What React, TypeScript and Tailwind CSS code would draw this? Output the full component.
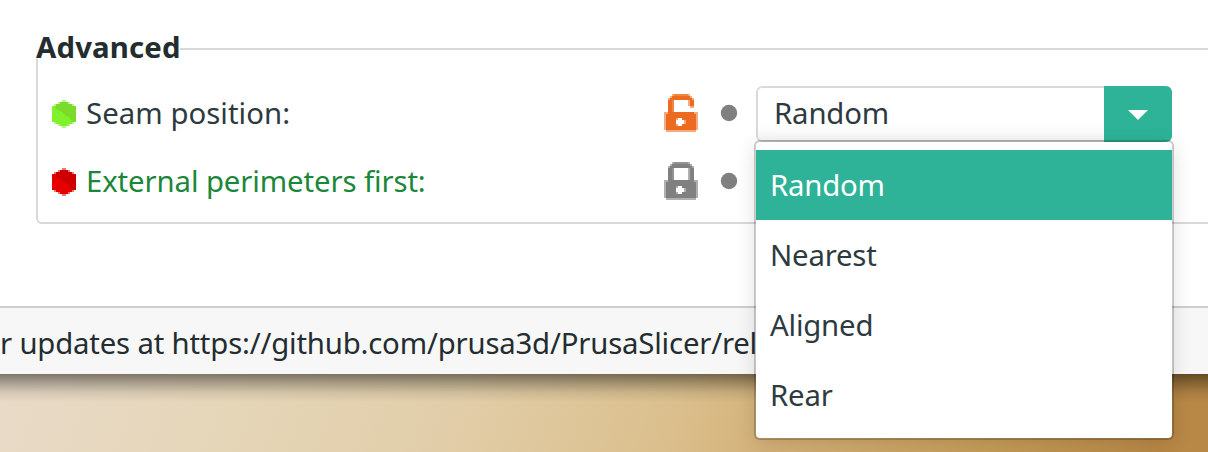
import React from "react";

function Hexagon({ base, shade, edge }: { base: string; shade: string; edge: string }) {
  return (
    <svg className="h-7 w-6 shrink-0" viewBox="0 0 24 28" aria-hidden="true">
      <g shapeRendering="crispEdges">
        <path
          fill={edge}
          d="M10 0h4v2h4v2h4v2h2v16h-2v2h-4v2h-4v2h-4v-2h-4v-2h-4v-2h-2v-16h2v-2h4v-2h4z"
        />
        <path
          fill={base}
          d="M8 2h8v2h4v2h4v16h-4v2h-4v2h-8v-2h-4v-2h-4v-16h4v-2h4z"
        />
      </g>
      <path fill={shade} d="M8 2h8v2h4v2h4v16h-4c-1-3-4-6-7-7c-2-3-6-5-10-6l1-3v-2h4z" />
    </svg>
  );
}

function Lock({ open = false }: { open?: boolean }) {
  const main = open ? "#ed6b21" : "#808080";
  const mid = open ? "#f0853f" : "#929292";
  const soft = open ? "#f5ab80" : "#b0b0b0";
  return (
    <svg
      className="-mt-0.5 h-[38px] w-[34px] shrink-0"
      viewBox="0 0 34 38"
      shapeRendering="crispEdges"
      aria-hidden="true"
    >
      <path fill={soft} d="M8 0h18v2h2v2h2v4h-6v-2h-14v2h-6v-4h2v-2h2z" />
      <path fill={mid} d="M10 0h14v2h-14z" />
      <path fill={mid} d="M8 6h2v12h-2z" />
      <path fill={soft} d={open ? "M24 6h2v6h4v2h-4v-2h-2z" : "M24 6h2v12h-2z"} />
      <path fill={main} d="M8 2h18v2h2v2h-22v-2h2z" />
      <path fill={main} d="M4 6h4v12h-4z" />
      <path fill={main} d={open ? "M26 6h4v6h-4z" : "M26 6h4v12h-4z"} />
      <path fill={soft} d="M0 18h34v18h-2v2h-30v-2h-2z" />
      <path fill={main} d="M2 20h30v16h-30zM4 18h26v2h-26z" />
      <path fill={soft} d="M12 24h6v2h4v4h-4v2h-6z" />
      <path fill="#ffffff" d="M12 26h2v-2h4v2h2v4h-2v2h-4v-2h-2z" />
    </svg>
  );
}

function Dot() {
  return (
    <svg className="-mt-0.5 ml-[22px] size-[18px] shrink-0" viewBox="0 0 18 18" aria-hidden="true">
      <circle cx="9" cy="9" r="8.2" fill="#808080" />
    </svg>
  );
}

const options = ["Random", "Nearest", "Aligned", "Rear"];

function SeamSelect() {
  return (
    <div className="relative ml-[18px] h-14 w-[416px] shrink-0">
      <div className="flex h-full w-full overflow-hidden rounded-md">
        <div className="flex flex-1 items-center rounded-l-md border-2 border-r-0 border-[#d9d9d9] bg-linear-to-b from-white from-70% to-[#f8f8f8] pb-0.5 pl-4 tracking-[-0.15px]">
          Random
        </div>
        <div className="flex w-[68px] items-center justify-center bg-[#2eb398]">
          <svg className="mt-0.5 h-2.5 w-5" viewBox="0 0 20 10" aria-hidden="true">
            <path d="M0 0h20l-10 10z" fill="#ffffff" />
          </svg>
        </div>
      </div>
      <ul className="absolute -left-0.5 top-[54px] z-10 w-[420px] rounded-md border-2 border-black/20 bg-white bg-clip-padding py-2 tracking-[-0.2px] shadow-[0_4px_20px_rgba(0,0,0,0.12)]">
        {options.map((name, i) => (
          <li
            key={name}
            className={i === 0 ? "flex h-[70px] items-center bg-[#2eb398] pl-3.5 text-white" : "flex h-[70px] items-center pl-3.5"}
          >
            {name}
          </li>
        ))}
      </ul>
    </div>
  );
}

export default function App() {
  return (
    <div className="flex h-[452px] w-[1208px] flex-col overflow-hidden bg-white font-['Noto_Sans',sans-serif] text-[29.333px] leading-10 text-[#2d3a3f]">
      <main className="h-[306px] shrink-0 pl-9 pt-12">
        <section className="h-44 rounded-bl-md border-2 border-r-0 border-[#d9d9d9]">
          <h2 className="-ml-0.5 -mt-[23px] h-8 w-36 bg-white font-bold tracking-[0.15px] text-[#232d30]">
            Advanced
          </h2>
          <div className="mt-[21px] flex h-[68px] items-center pl-3.5">
            <Hexagon base="#80f22b" shade="#7bdb2b" edge="#b6f58a" />
            <span className="w-[588px] shrink-0 pb-0.5 pl-2.5 tracking-[0.05px]">Seam position:</span>
            <Lock open />
            <Dot />
            <SeamSelect />
          </div>
          <div className="flex h-[68px] items-center pl-3.5">
            <Hexagon base="#e60000" shade="#cc0000" edge="#ec7777" />
            <span className="w-[588px] shrink-0 pb-0.5 pl-2.5 tracking-[-0.1px] text-[#1b8738]">
              External perimeters first:
            </span>
            <Lock />
            <Dot />
          </div>
        </section>
      </main>
      <footer className="flex h-[68px] shrink-0 items-center overflow-hidden whitespace-nowrap border-t-2 border-[#cfcfcf] bg-[#f7f7f7] pt-1 tracking-[-0.18px] text-[#232d30]">
        r updates at https://github.com/prusa3d/PrusaSlicer/rel
      </footer>
      <div className="flex-1 bg-[linear-gradient(110deg,#e8dac7_0%,#e5d6b8_20%,#e1cda8_38%,#dbc08e_55%,#d3b077_65%,#c59d59_82%,#b88846_96%)]">
        <div className="h-7 bg-[linear-gradient(to_bottom,rgba(0,0,0,0.46),rgba(0,0,0,0.28)_30%,rgba(0,0,0,0.09)_65%,transparent)]" />
      </div>
    </div>
  );
}
